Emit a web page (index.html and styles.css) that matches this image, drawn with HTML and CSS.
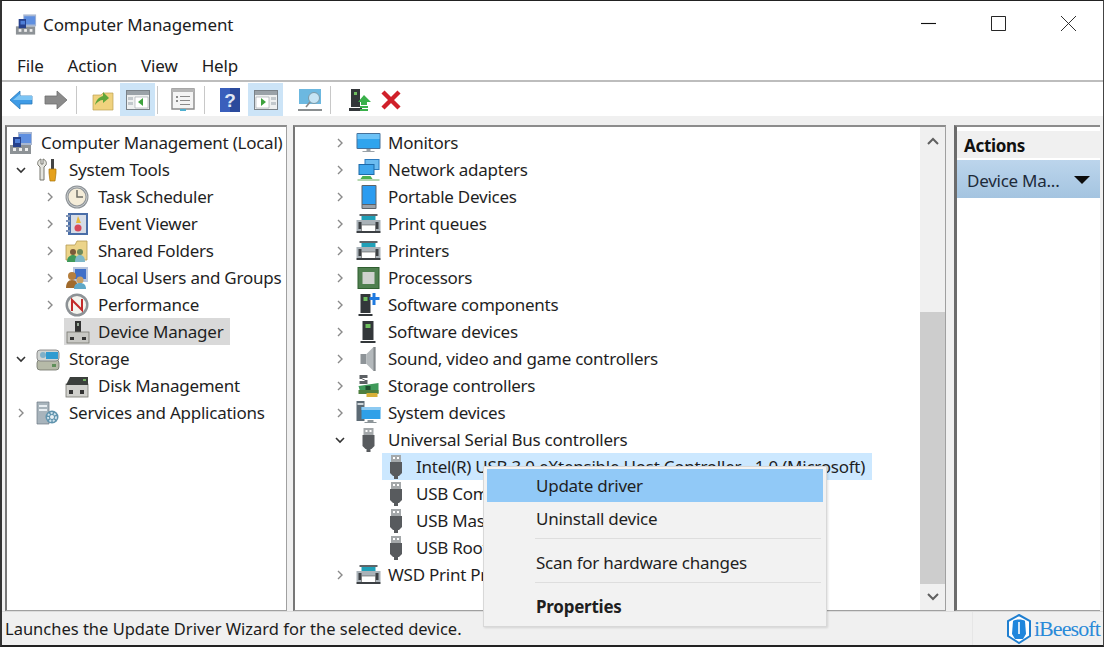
FILE: index.html
```html
<!DOCTYPE html>
<html lang="en">
<head>
<meta charset="utf-8">
<title>Computer Management</title>
<link rel="stylesheet" href="styles.css">
</head>
<body>
<svg class="defs" aria-hidden="true">
  <defs>
    <symbol id="i-cm" viewBox="0 0 24 24"><rect x="1" y="14" width="21" height="9" fill="#8d9296"/><rect x="4" y="17" width="3" height="3" fill="#eee"/><rect x="10" y="17" width="3" height="3" fill="#eee"/><rect x="16" y="17" width="3" height="3" fill="#eee"/><path d="M9 1h14v13H9z" fill="#a8b7d2"/><path d="M10 3h12v9H10z" fill="#5f8fe0"/><path d="M4 6h8v10H4z" fill="#26418c"/><path d="M6 8h5v4H6z" fill="#4f7fd8"/></symbol>
    <symbol id="i-tools" viewBox="0 0 24 24"><path d="M5 1c-3 1-4 4-3 6l2 2v13h4V9l2-2c1-2 0-5-3-6v5H5z" fill="#e4e4de" stroke="#77776f"/><path d="M15 1h3v10h-3z" fill="#444"/><path d="M13 11h7v4l-1 8h-5l-1-8z" fill="#e5a11d" stroke="#a87208" stroke-width=".7"/></symbol>
    <symbol id="i-clock" viewBox="0 0 24 24"><circle cx="12" cy="12" r="11.5" fill="#8e9397"/><circle cx="12" cy="12" r="8.5" fill="#f4ecd8"/><circle cx="12" cy="12" r="10" fill="none" stroke="#c6cacc"/><path d="M12 5v7h6" fill="none" stroke="#6e6e66" stroke-width="1.5"/></symbol>
    <symbol id="i-event" viewBox="0 0 24 24"><path d="M3 1h20v22H3z" fill="#4a6ea8"/><path d="M6 3h15v18H6z" fill="#d6dce6"/><path d="M1 3h4v2H1zM1 8h4v2H1zM1 13h4v2H1zM1 18h4v2H1z" fill="#8296b8"/><path d="M13 4l3 7h-5z" fill="#e8b83a"/><circle cx="13" cy="16" r="3.5" fill="#d6485a"/></symbol>
    <symbol id="i-shared" viewBox="0 0 24 24"><path d="M1 6h9l2-4h10v19H1z" fill="#ecd48a" stroke="#b59a50" stroke-width=".8"/><circle cx="8" cy="13" r="3" fill="#7a5a38"/><circle cx="15" cy="13" r="3" fill="#6e8a5a"/><path d="M2 23c0-5 3-7 6-7s5 2 5 7z" fill="#3f9a5a"/><path d="M10 23c0-5 2-7 5-7s5 2 5 7z" fill="#7fb8c8"/></symbol>
    <symbol id="i-users" viewBox="0 0 24 24"><path d="M8 1h15v15H8z" fill="#b9c6de"/><path d="M10 3h11v10H10z" fill="#3f6fc8"/><circle cx="7" cy="10" r="4" fill="#b57e3c"/><path d="M1 22c0-5 2-8 6-8s6 3 6 8z" fill="#a06a2c"/><circle cx="15" cy="14" r="3.5" fill="#c9a066"/><path d="M9 23c0-4 2-6 6-6s6 2 6 6z" fill="#5fa8c8"/></symbol>
    <symbol id="i-perf" viewBox="0 0 24 24"><circle cx="12" cy="12" r="11.5" fill="#8d9296"/><circle cx="12" cy="12" r="9" fill="#f4f4ee"/><path d="M7 18V7l10 10V6" fill="none" stroke="#c32a2a" stroke-width="2"/></symbol>
    <symbol id="i-dev" viewBox="0 0 24 24"><path d="M9 1h6v12H9z" fill="#333"/><rect x="11" y="3" width="2" height="3" fill="#9a9"/><rect x="1" y="12" width="22" height="11" fill="#c8c8c4" stroke="#77776f" stroke-width=".8"/><rect x="4" y="17" width="4" height="3" fill="#333"/><rect x="16" y="17" width="4" height="3" fill="#333"/></symbol>
    <symbol id="i-storage" viewBox="0 0 24 24"><rect x="1" y="13" width="22" height="10" rx="3" fill="#b6baa8" stroke="#6e7268" stroke-width=".8"/><rect x="16" y="17" width="4" height="3" fill="#5f8f5a"/><rect x="1" y="3" width="22" height="11" rx="3" fill="#d0d4d2" stroke="#777" stroke-width=".8"/><path d="M10 5h12v7H10z" fill="#2f9bd0"/><circle cx="7" cy="8" r="3" fill="#7fb0c8"/></symbol>
    <symbol id="i-disk" viewBox="0 0 24 24"><rect x="1" y="10" width="22" height="13" fill="#d0d0cc" stroke="#77776f" stroke-width=".8"/><path d="M5 3h18v8H1z" fill="#3b3f3c"/><rect x="18" y="5" width="3" height="2" fill="#6fae5f"/><rect x="4" y="16" width="4" height="4" fill="#333"/><rect x="15" y="16" width="4" height="4" fill="#333"/></symbol>
    <symbol id="i-serv" viewBox="0 0 24 24"><path d="M1 1h12v22H1z" fill="#a8b4bc" stroke="#6f7a84" stroke-width=".7"/><path d="M3 4h8v2H3zM3 8h8v2H3z" fill="#e8eef2"/><circle cx="16" cy="16" r="6.5" fill="#5f93ad"/><circle cx="16" cy="16" r="4" fill="none" stroke="#cfe2ec" stroke-width="2" stroke-dasharray="2 1.4"/><circle cx="16" cy="16" r="2" fill="#e8f0f4"/></symbol>
    <symbol id="i-mon" viewBox="0 0 24 24"><rect x="0" y="2" width="24" height="16" rx="1" fill="#46719a"/><rect x="1" y="3" width="22" height="14" fill="#2fa4ee"/><path d="M1 3h22v5H1z" fill="#6cc2f6"/><path d="M10 18h4v2h4v1H6v-1h4z" fill="#9aa2a8"/></symbol>
    <symbol id="i-net" viewBox="0 0 24 24"><rect x="8" y="1" width="15" height="11" fill="#2d7cc0"/><rect x="9" y="2" width="13" height="9" fill="#6cbcf0"/><rect x="2" y="6" width="16" height="11" fill="#1f6aa8"/><rect x="3" y="7" width="14" height="9" fill="#3fa6ec"/><path d="M6 18h8l2 3H4z" fill="#4fb04f"/><path d="M1 21h22v2H1z" fill="#b5d6b0"/></symbol>
    <symbol id="i-port" viewBox="0 0 24 24"><rect x="5" y="0" width="15" height="24" rx="1" fill="#5c6268"/><rect x="6" y="1" width="13" height="18" fill="#2b9cf0"/><rect x="6" y="20" width="13" height="3" fill="#9ca2a8"/></symbol>
    <symbol id="i-print" viewBox="0 0 24 24"><path d="M5 3h14v7H5z" fill="#1fa0b8"/><path d="M3 2h18v2H3z" fill="#5f6468"/><rect x="0" y="8" width="24" height="11" fill="#aab2b8"/><rect x="2" y="10" width="3" height="7" fill="#3c4044"/><rect x="19" y="10" width="3" height="7" fill="#3c4044"/><path d="M5 13h14v7H5z" fill="#fff" stroke="#555" stroke-width=".6"/><path d="M0 19h24v2H0z" fill="#3c4044"/></symbol>
    <symbol id="i-chip" viewBox="0 0 24 24"><rect x="1" y="1" width="22" height="22" fill="#2f5e2f"/><rect x="2" y="2" width="20" height="20" fill="#4f7f4f"/><rect x="6" y="6" width="12" height="12" fill="#cfd2ce"/></symbol>
    <symbol id="i-softc" viewBox="0 0 24 24"><path d="M4 1h10v19H4z" fill="#33373a"/><rect x="7" y="4" width="4" height="4" fill="#6fbf5f"/><path d="M2 21h14v2H2z" fill="#33373a"/><path d="M16 0h3v4h4v3h-4v5h-3V7h-3V4h3z" fill="#1f7ae0"/></symbol>
    <symbol id="i-softd" viewBox="0 0 24 24"><path d="M6 1h11v19H6z" fill="#33373a"/><rect x="9" y="4" width="5" height="4" fill="#6fbf5f"/><path d="M4 21h15v2H4z" fill="#33373a"/></symbol>
    <symbol id="i-sound" viewBox="0 0 24 24"><rect x="4" y="7" width="6" height="10" fill="#8e9498"/><path d="M10 7l7-7h2v24h-2l-7-7z" fill="#b4b9bc"/><path d="M17 0h2v24h-2z" fill="#84898c"/></symbol>
    <symbol id="i-storc" viewBox="0 0 24 24"><path d="M3 1h8v3H6v2h5v4H3V7h5V5H3z" fill="#5c6064"/><path d="M2 12l20-3v10H4z" fill="#3f9a5a"/><path d="M2 16h20v4H2z" fill="#4f7f3f"/><rect x="10" y="19" width="11" height="4" fill="#d8b038"/><rect x="9" y="12" width="5" height="4" fill="#1f4f2f"/></symbol>
    <symbol id="i-sys" viewBox="0 0 24 24"><path d="M0 0h8v20H0z" fill="#5c6a74"/><path d="M1 2h6v2H1z" fill="#cfd6da"/><path d="M5 6h19v12H5z" fill="#2fa0e8"/><path d="M5 6h19v3H5z" fill="#8ccaf2"/><path d="M11 19h6v2h3v1H8v-1h3z" fill="#8d9599"/></symbol>
    <symbol id="i-usb" viewBox="0 0 24 24"><rect x="7" y="0" width="10" height="7" fill="#a4a8aa"/><rect x="9" y="2" width="2" height="2" fill="#fff"/><rect x="13" y="2" width="2" height="2" fill="#fff"/><path d="M6 7h12v11l-3 3h-6l-3-3z" fill="#585b5e"/><rect x="10" y="21" width="4" height="3" fill="#585b5e"/></symbol>
    <symbol id="i-chev" viewBox="0 0 12 12"><path d="M4 2l4 4-4 4" fill="none" stroke="currentColor" stroke-width="1.4"/></symbol>
  </defs>
</svg>

<div class="window">
  <header class="titlebar">
    <svg class="title-icon"><use href="#i-cm"/></svg>
    <span class="title-text">Computer Management</span>
    <div class="win-controls">
      <svg class="win-btn" viewBox="0 0 16 16"><path d="M0 8h16" stroke="#111" stroke-width="1.2"/></svg>
      <svg class="win-btn" viewBox="0 0 16 16"><path d="M.5.5h15v15H.5z" fill="none" stroke="#111"/></svg>
      <svg class="win-btn" viewBox="0 0 16 16"><path d="M0 0l16 16M16 0L0 16" stroke="#222" stroke-width="1"/></svg>
    </div>
  </header>

  <nav class="menubar">
    <span>File</span><span>Action</span><span>View</span><span>Help</span>
  </nav>

  <div class="toolbar">
    <svg class="tb tb-back" viewBox="0 0 24 20"><path d="M11 1L1 10l10 9v-5h12V6H11z" fill="#3f9be6" stroke="#2a78b8" stroke-width=".8"/><path d="M11 4L4 10h19V6H11z" fill="#7cc4f4"/></svg>
    <svg class="tb tb-fwd" viewBox="0 0 24 20"><path d="M13 1l10 9-10 9v-5H1V6h12z" fill="#8b8b8b" stroke="#6e6e6e" stroke-width=".8"/></svg>
    <i class="tb-sep sep-a"></i>
    <svg class="tb tb-folder" viewBox="0 0 22 22"><path d="M1 6h8l2-2h10v17H1z" fill="#f0d27e" stroke="#bca050" stroke-width=".7"/><path d="M3 16c1-5 4-8 8-9V3l6 6-6 5v-3c-3 0-6 2-8 5z" fill="#5fa63a"/></svg>
    <span class="tb-toggle"><svg viewBox="0 0 24 20"><rect x=".5" y=".5" width="23" height="19" fill="#eef0f0" stroke="#7a8288"/><path d="M1 1h22v4H1z" fill="#9aa2a8"/><path d="M2 7h5v3H2zM2 12h5v3H2z" fill="#c2c8cc"/><path d="M9 7h13v11H9z" fill="#fff" stroke="#9aa2a8" stroke-width=".6"/><path d="M17 8l-5 4 5 4z" fill="#3ea23e"/></svg></span>
    <i class="tb-sep sep-b"></i>
    <svg class="tb tb-sheet" viewBox="0 0 24 24"><path d="M1 1h22v20H1z" fill="#f4f4f4" stroke="#8a8a8a" stroke-width="1.4"/><path d="M1 1h22v3H1z" fill="#b5b5b5"/><path d="M5 8h2v2H5zM9 8h10v1H9zM5 12h2v2H5zM9 12h10v1H9zM9 16h10v1H9z" fill="#8a8a8a"/><path d="M9 21h6v2H9z" fill="#4fb0d0"/></svg>
    <i class="tb-sep sep-c"></i>
    <svg class="tb tb-help" viewBox="0 0 20 24"><rect width="20" height="24" fill="#2b4a9c"/><rect x="0" y="0" width="10" height="24" fill="#3a5fbc"/><text class="help-q" x="10" y="19">?</text></svg>
    <span class="tb-toggle tog-b"><svg viewBox="0 0 24 20"><rect x=".5" y=".5" width="23" height="19" fill="#eef0f0" stroke="#7a8288"/><path d="M1 1h22v4H1z" fill="#9aa2a8"/><path d="M17 7h5v3h-5zM17 12h5v3h-5z" fill="#c2c8cc"/><path d="M2 7h13v11H2z" fill="#fff" stroke="#9aa2a8" stroke-width=".6"/><path d="M7 8l5 4-5 4z" fill="#3ea23e"/></svg></span>
    <svg class="tb tb-screen" viewBox="0 0 26 24"><path d="M2 1h22v15H2z" fill="#6cb8e0"/><circle cx="17" cy="10" r="5.5" fill="#c6e4f4" stroke="#7a9aa8"/><path d="M13 14l-4 5" stroke="#8a8a8a" stroke-width="1.6"/><path d="M1 21h24v2H1z" fill="#8a8e90"/></svg>
    <i class="tb-sep sep-d"></i>
    <svg class="tb tb-device" viewBox="0 0 22 24"><path d="M2 1h9v18H2z" fill="#33373a"/><rect x="5" y="4" width="3" height="3" fill="#6fbf5f"/><path d="M0 20h13v3H0z" fill="#33373a"/><path d="M15 7l7 7h-4v3h-6v-3H9z" fill="#39b04a"/><path d="M11 18h8v2h-8zM11 21h8v2h-8z" fill="#39b04a"/></svg>
    <svg class="tb tb-x" viewBox="0 0 20 20"><path d="M2 2l16 16M18 2L2 18" stroke="#d0202a" stroke-width="4.4"/></svg>
  </div>

  <main class="panes">
    <section class="pane pane-left">
      <ul class="tree">
        <li class="row lv0"><svg class="ico ico-l"><use href="#i-cm"/></svg><span class="label">Computer Management (Local)</span></li>
        <li class="row lv1"><svg class="chev open" viewBox="0 0 12 12"><path d="M2 4l4 4 4-4" fill="none" stroke="currentColor" stroke-width="1.6"/></svg><svg class="ico ico-l"><use href="#i-tools"/></svg><span class="label">System Tools</span></li>
        <li class="row lv2"><svg class="chev"><use href="#i-chev"/></svg><svg class="ico ico-l"><use href="#i-clock"/></svg><span class="label">Task Scheduler</span></li>
        <li class="row lv2"><svg class="chev"><use href="#i-chev"/></svg><svg class="ico ico-l"><use href="#i-event"/></svg><span class="label">Event Viewer</span></li>
        <li class="row lv2"><svg class="chev"><use href="#i-chev"/></svg><svg class="ico ico-l"><use href="#i-shared"/></svg><span class="label">Shared Folders</span></li>
        <li class="row lv2"><svg class="chev"><use href="#i-chev"/></svg><svg class="ico ico-l"><use href="#i-users"/></svg><span class="label">Local Users and Groups</span></li>
        <li class="row lv2"><svg class="chev"><use href="#i-chev"/></svg><svg class="ico ico-l"><use href="#i-perf"/></svg><span class="label">Performance</span></li>
        <li class="row lv2b"><span class="picked"><svg class="ico ico-l"><use href="#i-dev"/></svg><span class="label">Device Manager</span></span></li>
        <li class="row lv1"><svg class="chev open" viewBox="0 0 12 12"><path d="M2 4l4 4 4-4" fill="none" stroke="currentColor" stroke-width="1.6"/></svg><svg class="ico ico-l"><use href="#i-storage"/></svg><span class="label">Storage</span></li>
        <li class="row lv2 nochev"><svg class="ico ico-l"><use href="#i-disk"/></svg><span class="label">Disk Management</span></li>
        <li class="row lv1"><svg class="chev"><use href="#i-chev"/></svg><svg class="ico ico-l"><use href="#i-serv"/></svg><span class="label">Services and Applications</span></li>
      </ul>
    </section>

    <section class="pane pane-mid">
      <ul class="tree tree-mid">
        <li class="row dv"><svg class="chev"><use href="#i-chev"/></svg><svg class="ico"><use href="#i-mon"/></svg><span class="label">Monitors</span></li>
        <li class="row dv"><svg class="chev"><use href="#i-chev"/></svg><svg class="ico"><use href="#i-net"/></svg><span class="label">Network adapters</span></li>
        <li class="row dv"><svg class="chev"><use href="#i-chev"/></svg><svg class="ico"><use href="#i-port"/></svg><span class="label">Portable Devices</span></li>
        <li class="row dv"><svg class="chev"><use href="#i-chev"/></svg><svg class="ico"><use href="#i-print"/></svg><span class="label">Print queues</span></li>
        <li class="row dv"><svg class="chev"><use href="#i-chev"/></svg><svg class="ico"><use href="#i-print"/></svg><span class="label">Printers</span></li>
        <li class="row dv"><svg class="chev"><use href="#i-chev"/></svg><svg class="ico"><use href="#i-chip"/></svg><span class="label">Processors</span></li>
        <li class="row dv"><svg class="chev"><use href="#i-chev"/></svg><svg class="ico"><use href="#i-softc"/></svg><span class="label">Software components</span></li>
        <li class="row dv"><svg class="chev"><use href="#i-chev"/></svg><svg class="ico"><use href="#i-softd"/></svg><span class="label">Software devices</span></li>
        <li class="row dv"><svg class="chev"><use href="#i-chev"/></svg><svg class="ico"><use href="#i-sound"/></svg><span class="label">Sound, video and game controllers</span></li>
        <li class="row dv"><svg class="chev"><use href="#i-chev"/></svg><svg class="ico"><use href="#i-storc"/></svg><span class="label">Storage controllers</span></li>
        <li class="row dv"><svg class="chev"><use href="#i-chev"/></svg><svg class="ico"><use href="#i-sys"/></svg><span class="label">System devices</span></li>
        <li class="row dv"><svg class="chev open" viewBox="0 0 12 12"><path d="M2 4l4 4 4-4" fill="none" stroke="currentColor" stroke-width="1.6"/></svg><svg class="ico"><use href="#i-usb"/></svg><span class="label">Universal Serial Bus controllers</span></li>
        <li class="row usb selected"><svg class="ico ico-usb"><use href="#i-usb"/></svg><span class="label">Intel(R) USB 3.0 eXtensible Host Controller - 1.0 (Microsoft)</span></li>
        <li class="row usb"><svg class="ico ico-usb"><use href="#i-usb"/></svg><span class="label">USB Composite Device</span></li>
        <li class="row usb"><svg class="ico ico-usb"><use href="#i-usb"/></svg><span class="label">USB Mass Storage Device</span></li>
        <li class="row usb"><svg class="ico ico-usb"><use href="#i-usb"/></svg><span class="label">USB Root Hub (USB 3.0)</span></li>
        <li class="row dv"><svg class="chev"><use href="#i-chev"/></svg><svg class="ico"><use href="#i-print"/></svg><span class="label">WSD Print Provider</span></li>
      </ul>
      <div class="scrollbar">
        <svg class="sb-arrow" viewBox="0 0 12 12"><path d="M1 8l5-5 5 5" fill="none" stroke="#606060" stroke-width="2"/></svg>
        <div class="sb-track"><div class="sb-thumb"></div></div>
        <svg class="sb-arrow sb-down" viewBox="0 0 12 12"><path d="M1 4l5 5 5-5" fill="none" stroke="#606060" stroke-width="2"/></svg>
      </div>
    </section>

    <aside class="pane pane-right">
      <div class="act-head">Actions</div>
      <div class="act-item"><span>Device Ma...</span><i class="tri"></i></div>
    </aside>
  </main>

  <footer class="statusbar">
    <span class="status-text">Launches the Update Driver Wizard for the selected device.</span>
    <i class="status-div"></i>
    <div class="brand">
      <svg class="brand-ico" viewBox="0 0 26 30"><path d="M13 1l11 6v15l-11 7-11-7V7z" fill="#fff" stroke="#1f7fd0" stroke-width="2"/><path d="M7 7c2-2 10-2 12 0l1 13-3 5h-8l-3-5z" fill="#1f86dc"/><path d="M12 8h2v12h-2z" fill="#cfe6fa"/></svg>
      <span class="brand-name">iBeesoft</span>
    </div>
  </footer>

  <div class="ctx">
    <div class="ctx-item hot">Update driver</div>
    <div class="ctx-item">Uninstall device</div>
    <hr class="ctx-sep">
    <div class="ctx-item">Scan for hardware changes</div>
    <hr class="ctx-sep">
    <div class="ctx-item strong">Properties</div>
  </div>
</div>
</body>
</html>
```

FILE: styles.css
```css
* { box-sizing: border-box; }
html, body { margin: 0; padding: 0; }
body { width: 1104px; height: 647px; overflow: hidden; background: #fff; font-family: "Noto Sans", "Open Sans", sans-serif; color: #1c1c1c; }
.defs { width: 0; height: 0; display: block; position: absolute; }

.window { position: relative; width: 1104px; height: 647px; display: flex; flex-direction: column; border-top: 1px solid #222; border-left: 2px solid #333; border-right: 1px solid #444; border-bottom: 2px solid #222; }

.titlebar { height: 47px; display: flex; align-items: center; padding: 0 0 1px 13px; background: #fff; }
.title-icon { width: 22px; height: 23px; flex: none; }
.title-text { margin-left: 6px; font-size: 17px; letter-spacing: -0.1px; }
.win-controls { margin-left: auto; display: flex; gap: 55px; padding: 0 27px 2px 0; }
.win-btn { width: 15px; height: 15px; display: block; }

.menubar { height: 34px; display: flex; padding: 2px 0 0 15px; gap: 24px; align-items: center; font-size: 17px; letter-spacing: -0.15px; background: #fff; border-bottom: 2px solid #bdbdbd; }

.toolbar { height: 34px; display: flex; align-items: center; background: #fff; padding: 1px 0 0 7px; }
.tb { display: block; flex: none; }
.tb-back, .tb-fwd { width: 24px; height: 20px; }
.tb-fwd { margin-left: 11px; }
.tb-sep { display: block; width: 1px; height: 28px; background: #c8c8c8; flex: none; }
.sep-a { margin-left: 8px; }
.tb-folder { width: 22px; height: 22px; margin-left: 15px; }
.tb-toggle { width: 35px; height: 33px; background: #cce4f7; display: flex; align-items: center; justify-content: center; margin-left: 6px; flex: none; }
.tb-toggle svg { width: 24px; height: 20px; display: block; }
.sep-b { margin-left: 2px; }
.tb-sheet { width: 24px; height: 24px; margin-left: 13px; }
.sep-c { margin-left: 9px; }
.tb-help { width: 20px; height: 24px; margin-left: 15px; }
.help-q { font-family: "Liberation Sans", sans-serif; font-weight: 700; font-size: 19px; text-anchor: middle; fill: #dfe6f4; }
.tog-b { margin-left: 8px; }
.tb-screen { width: 26px; height: 24px; margin-left: 14px; }
.sep-d { margin-left: 7px; }
.tb-device { width: 22px; height: 24px; margin-left: 18px; }
.tb-x { width: 20px; height: 20px; margin-left: 10px; }

.panes { flex: none; height: 495px; display: flex; background: #f0f0f0; padding: 9px 0 0 3px; gap: 6px; }
.pane { background: #fff; border: 1px solid #a0a0a0; border-top: 2px solid #8c8c8c; }
.pane-left { width: 282px; height: 486px; border-left-width: 2px; border-left-color: #777; }
.pane-mid { width: 653px; height: 486px; display: flex; justify-content: space-between; border-left-width: 2px; border-left-color: #777; }
.pane-right { width: 146px; height: 486px; margin-left: 2px; border-left: 3px solid #6c6c6c; border-right: 0; }

.tree { list-style: none; margin: 0; padding: 2px 0 0; font-size: 17px; letter-spacing: -0.25px; }
.row { height: 27px; display: flex; align-items: center; white-space: nowrap; color: #1f1f1f; }
.ico { width: 25px; height: 24px; flex: none; display: block; }
.ico-l { width: 24px; height: 24px; }
.label { margin-left: 8px; }
.chev { width: 12px; height: 12px; flex: none; color: #8a8a8a; display: block; }
.chev.open { color: #333; }

.lv0 { padding-left: 2px; }
.lv1 { padding-left: 8px; }
.lv1 .chev { margin-right: 9px; }
.lv1 .label { margin-left: 9px; }
.lv2 { padding-left: 37px; }
.lv2 .chev { margin-right: 9px; }
.lv2 .label { margin-left: 9px; }
.lv2b { padding-left: 57px; }
.nochev { padding-left: 58px; }
.picked { display: flex; align-items: center; background: #d9d9d9; height: 27px; padding: 0 7px 0 2px; }

.tree-mid { flex: none; width: 625px; overflow: hidden; }
.dv { padding-left: 39px; }
.dv .chev { margin-right: 10px; }
.dv .label { margin-left: 7px; }
.usb { padding-left: 89px; }
.usb .ico-usb { width: 24px; }
.usb .label { margin-left: 8px; }
.selected { margin-left: 87px; padding-left: 2px; width: 490px; background: #cce8ff; }

.scrollbar { width: 25px; background: #f0f0f0; display: flex; flex-direction: column; align-items: center; }
.sb-arrow { width: 12px; height: 12px; flex: none; margin: 9px 0; }
.sb-down { margin: 6px 0 8px; }
.sb-track { flex: 1; width: 100%; display: flex; flex-direction: column; justify-content: flex-end; }
.sb-thumb { height: 272px; background: #cdcdcd; }

.act-head { height: 27px; margin-top: 4px; padding-left: 7px; background: #f0f0f0; font-size: 17px; font-weight: 700; letter-spacing: -0.3px; line-height: 29px; color: #111; }
.act-item { height: 38px; margin-top: 2px; padding: 2px 10px 0 10px; display: flex; align-items: center; justify-content: space-between; background: linear-gradient(#bcd5ec, #a4c4e0); font-size: 17px; letter-spacing: -0.25px; color: #1d2a3a; }
.tri { width: 0; height: 0; border-left: 8px solid transparent; border-right: 8px solid transparent; border-top: 8px solid #0c0c0c; }

.statusbar { flex: 1; display: flex; align-items: center; background: #f0f0f0; padding-left: 3px; position: relative; font-size: 16.5px; border-top: 1px solid #dcdcdc; }
.status-div { position: absolute; left: 970px; top: 0; bottom: 0; width: 1px; background: #e6e6e6; }
.brand { margin-left: auto; display: flex; align-items: center; gap: 2px; padding-right: 3px; }
.brand-ico { width: 26px; height: 30px; display: block; }
.brand-name { font-family: "Liberation Serif", serif; font-size: 22px; letter-spacing: -0.9px; color: #2a8ad8; line-height: 1; }

.ctx { position: absolute; left: 481px; top: 465px; width: 344px; height: 161px; padding: 2px 3px; background: #f2f2f2; border: 1px solid #d8d8d8; box-shadow: 1px 1px 2px rgba(0,0,0,.12); font-size: 17px; letter-spacing: -0.25px; }
.ctx-item { height: 33px; line-height: 33px; padding-left: 49px; color: #1f1f1f; }
.ctx-item.hot { background: #91c9f7; }
.ctx-item.strong { font-weight: 700; }
.ctx-sep { margin: 3px 2px 7px 48px; border: 0; border-top: 1px solid #dedede; height: 1px; }
```
